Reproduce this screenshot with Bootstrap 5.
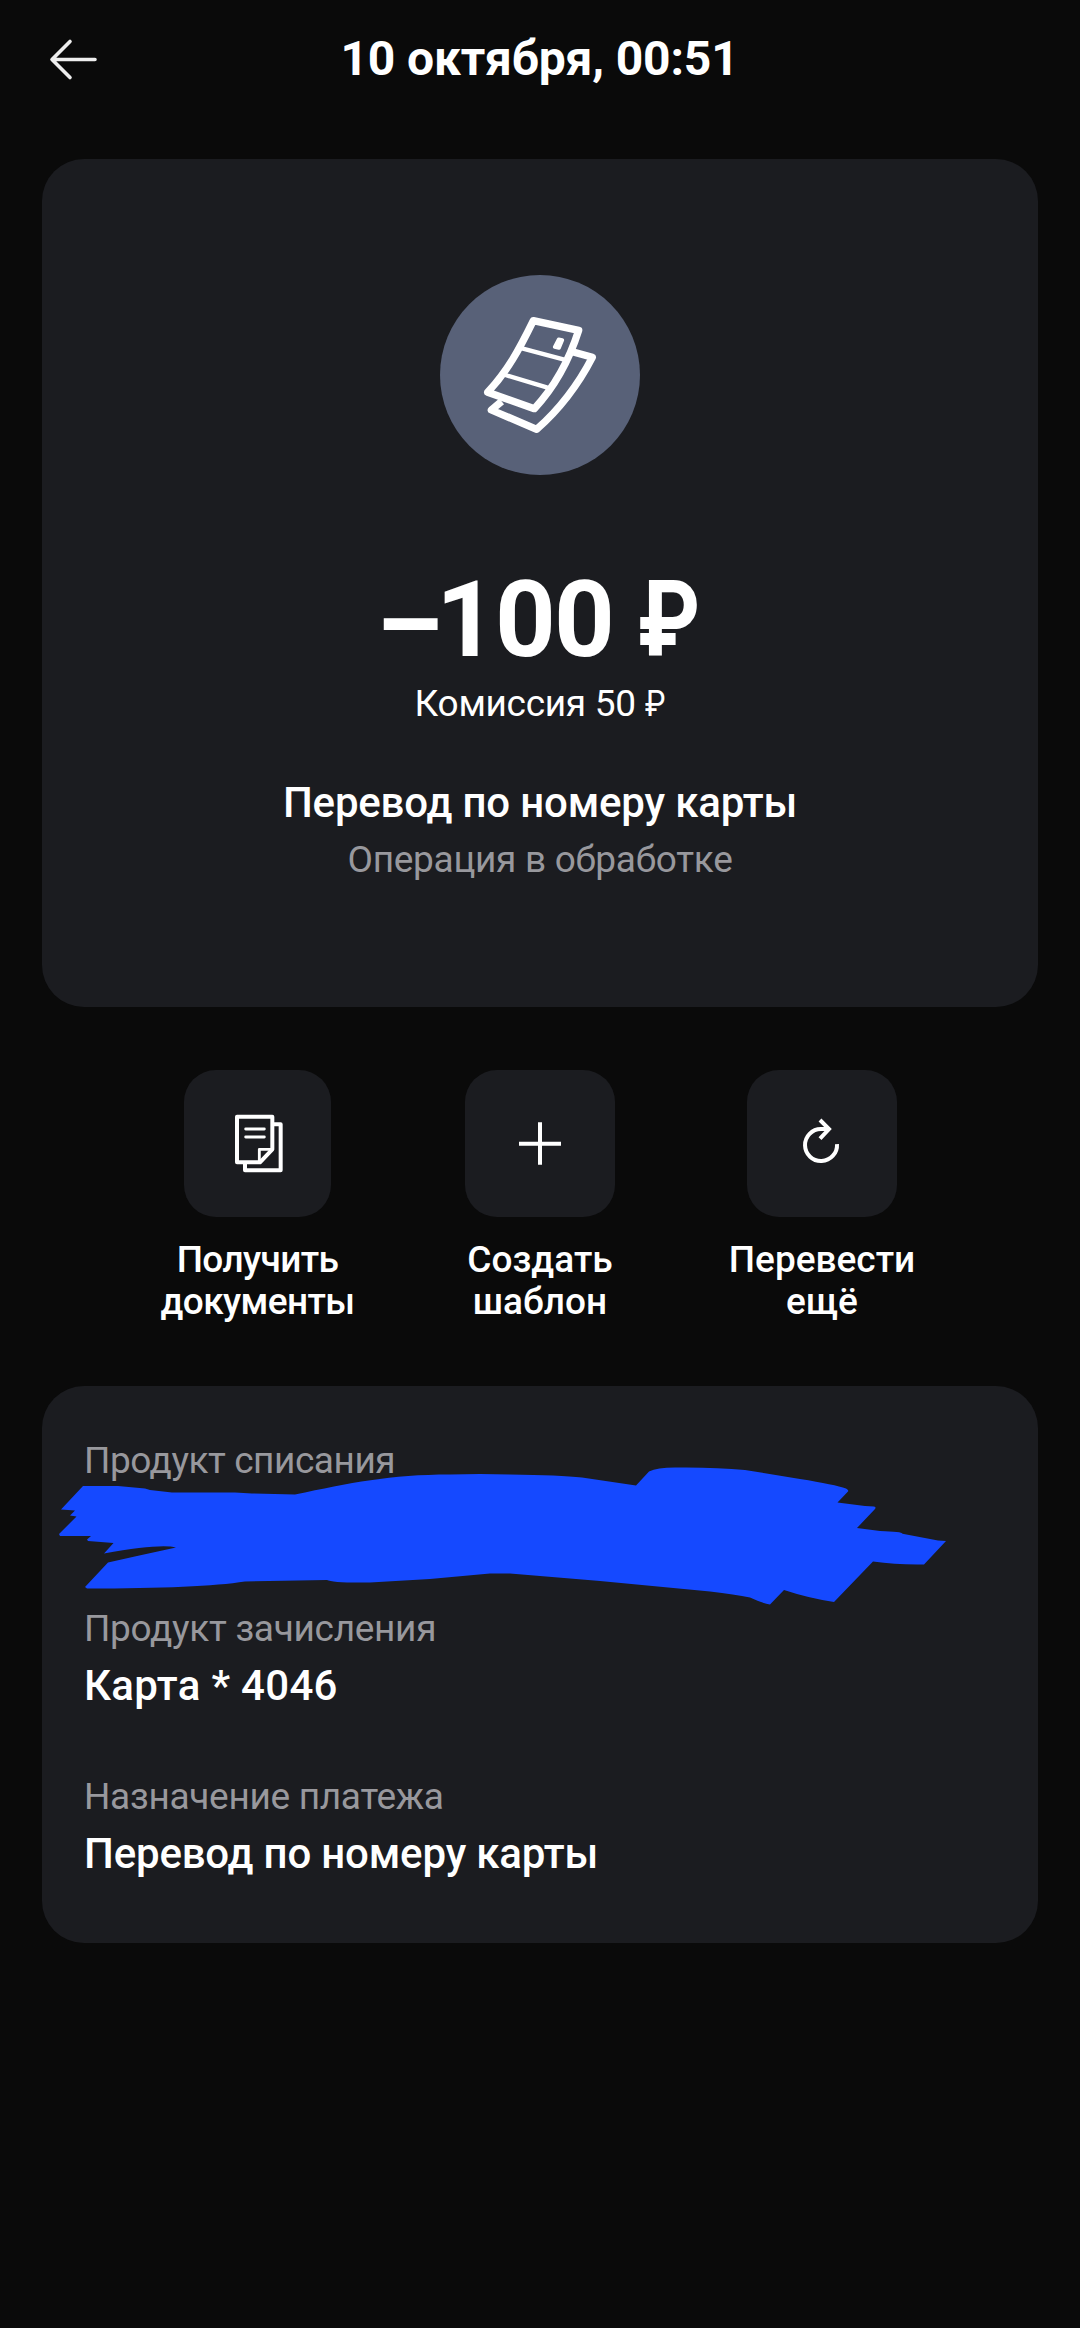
<!DOCTYPE html>
<html lang="ru">
<head>
<meta charset="utf-8">
<meta name="viewport" content="width=device-width, initial-scale=1">
<title>Операция</title>
<link href="https://cdn.jsdelivr.net/npm/bootstrap@5.3.0/dist/css/bootstrap.min.css" rel="stylesheet">
<style>
body{background:#0a0a0a;color:#fff;font-family:Roboto,"Noto Sans",sans-serif;min-height:2328px}
.panel{background:#1b1c20;border-radius:42px;margin:0 42px}
.topbar{height:159px;padding:31px 48px 0}
.topbar .side{width:56px;height:56px}
.heading{font-size:48px;line-height:56px;font-weight:700;letter-spacing:-.15px;margin:0 1px 0 0}
.summary{height:848px;padding-top:116px}
.avatar{width:200px;height:200px;background:#586178;margin-bottom:84px}
.amount{font-size:106px;line-height:122px;font-weight:700;letter-spacing:-1.8px}
.amount .dash{letter-spacing:-6.8px;vertical-align:-5px;line-height:0}
.rub{display:inline-block;transform:scaleX(.83);transform-origin:left;margin-right:-6.6px}
.txt .rub{margin-right:-3.4px}
.txt{font-size:37px;line-height:46px;letter-spacing:-.3px}
.val{font-size:42px;line-height:50px;font-weight:500;letter-spacing:-.18px}
.val.num{letter-spacing:.3px}
.summary .val{margin-top:51px}
.summary .muted{margin-top:9px}
.muted{color:#98989d}
.actions{padding:63px 116.5px 0;height:379px}
.act{width:282px;font-size:37px;line-height:42px;font-weight:500}
.act:first-child{letter-spacing:-.6px;margin-right:.5px}
.tile{width:150px;height:147px;border-radius:32px;background:#1b1c20;margin-bottom:22px}
.tile.narrow{width:147px}
.details{height:557px;padding:52px 42px 0}
.details .item{height:168px}
.details .item:first-child .txt{letter-spacing:-.45px}
.details .val{margin-top:9px}
.scribble{position:absolute;left:0;top:0;pointer-events:none}
</style>
</head>
<body>
<header class="topbar d-flex justify-content-between align-items-start">
  <svg class="side" viewBox="48 31 56 56" fill="none" stroke="#eee" stroke-width="3.6" stroke-linecap="round" stroke-linejoin="round"><path d="M95 59.5H52.5M70 41.5 52 59.5 70 77.500"/></svg>
  <h1 class="heading">10 октября, 00:51</h1>
  <span class="side"></span>
</header>
<main>
  <section class="panel summary d-flex flex-column align-items-center text-center">
    <div class="avatar rounded-circle">
      <svg class="d-block" width="200" height="200" viewBox="60 45 600 600" fill="none" stroke="#fff" stroke-width="22" stroke-linecap="round" stroke-linejoin="round">
        <path d="M340 182 476 211C447 302 408 376 343 446L203 397C263 332 297 270 340 182Z"/>
        <path d="M457 275 517 292C474 375 425 442 350 508L214 450 245 424" stroke-linecap="butt"/>
        <path d="M306 265 430 298M256 345 380 382" stroke-width="13"/>
        <path d="M416 238 427 240 417 264 404 261Z" fill="#fff" stroke-width="11"/>
      </svg>
    </div>
    <div class="amount"><span class="dash">–</span>100 <span class="rub">₽</span></div>
    <div class="txt">Комиссия 50 <span class="rub">₽</span></div>
    <div class="val">Перевод по номеру карты</div>
    <div class="txt muted">Операция в обработке</div>
  </section>
  <nav class="actions d-flex text-center">
    <div class="act d-flex flex-column align-items-center">
      <div class="tile narrow"><svg class="d-block" width="147" height="147" viewBox="132 60 441 441" fill="none" stroke="#fff" stroke-width="12" stroke-linejoin="round">
        <path d="M291 200H397V298L360 337H291ZM403 223H422V361H315V340"/>
        <path d="M358 335V298H396M317 237H373M317 261H373" stroke-width="8.500" stroke-linecap="round"/></svg></div>
      <span>Получить<br>документы</span>
    </div>
    <div class="act d-flex flex-column align-items-center">
      <div class="tile"><svg class="d-block" width="150" height="147" viewBox="75 60 450 441" fill="none" stroke="#fff" stroke-width="12"><path d="M237 281H363M300 217V344"/></svg></div>
      <span>Создать<br>шаблон</span>
    </div>
    <div class="act d-flex flex-column align-items-center">
      <div class="tile"><svg class="d-block" width="150" height="147" viewBox="921 60 450 441" fill="none" stroke="#fff" stroke-width="12"><path d="M1191 282A48 48 0 1 1 1143 237H1168M1140 210 1167 237 1140 266"/></svg></div>
      <span>Перевести<br>ещё</span>
    </div>
  </nav>
  <section class="panel details position-relative">
    <div class="item"><div class="txt muted">Продукт списания</div></div>
    <div class="item"><div class="txt muted">Продукт зачисления</div><div class="val num">Карта * 4046</div></div>
    <div class="item"><div class="txt muted">Назначение платежа</div><div class="val">Перевод по номеру карты</div></div>
    <svg class="scribble" width="996" height="557" viewBox="42 1386 996 557"><path fill="#1549ff" d="M83 1486H118L145 1488.500 150 1490 172 1492.500H235L252 1493.500 295 1494.500C350 1483 390 1474.500 450 1474.500Q480 1473.500 510 1474.500Q560 1475 582 1477.500L636 1485.500 649 1471.500Q657 1467.500 675 1467.500Q715 1467 745 1470L800 1479Q835 1484.500 846 1488.500Q849 1490 848 1491.500L837.500 1502.500 865 1506 874 1506.500Q876.500 1507 875 1509L857 1528 880 1531Q902 1531.500 902.500 1533.800L938 1540.500 946 1541 924 1564.500Q897 1565 873 1561.500L834 1602Q808 1598 784 1590L770 1604.500Q763 1603.500 750 1597.500 735 1594.500 710 1591.500L600 1581 510 1573.500H490L430 1579 370 1582.500Q332 1583 327 1580L245 1581.500Q200 1588.500 87 1588.500L85 1587 108 1562.500 137 1556 176 1547.500Q160 1543.500 104 1553.500L113.500 1543 88 1541 87 1539.500 91 1536H60L59 1534 76.500 1516.500 70 1515.500 75 1510.500 61 1509.500Z"/></svg>
  </section>
</main>
<script src="https://cdn.jsdelivr.net/npm/bootstrap@5.3.0/dist/js/bootstrap.bundle.min.js"></script>
</body>
</html>
